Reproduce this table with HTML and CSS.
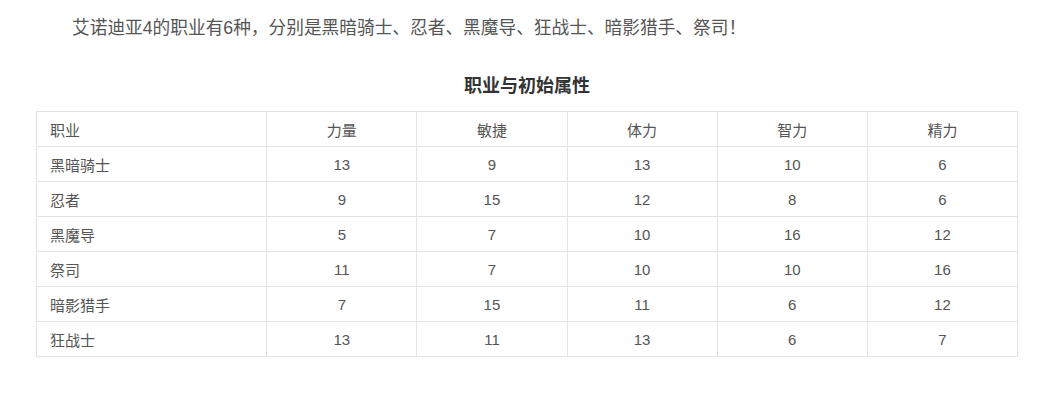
FILE: index.html
```html
<!DOCTYPE html>
<html lang="zh-CN">
<head>
<meta charset="utf-8">
<link rel="stylesheet" href="styles.css">
</head>
<body>
<div class="page">
  <p class="intro">艾诺迪亚4的职业有6种，分别是黑暗骑士、忍者、黑魔导、狂战士、暗影猎手、祭司！</p>
  <h3 class="title">职业与初始属性</h3>
  <table class="stats">
    <colgroup>
      <col class="c-name">
      <col class="c-num"><col class="c-num"><col class="c-num"><col class="c-num"><col class="c-num">
    </colgroup>
    <tr><td class="name">职业</td><td>力量</td><td>敏捷</td><td>体力</td><td>智力</td><td>精力</td></tr>
    <tr><td class="name">黑暗骑士</td><td>13</td><td>9</td><td>13</td><td>10</td><td>6</td></tr>
    <tr><td class="name">忍者</td><td>9</td><td>15</td><td>12</td><td>8</td><td>6</td></tr>
    <tr><td class="name">黑魔导</td><td>5</td><td>7</td><td>10</td><td>16</td><td>12</td></tr>
    <tr><td class="name">祭司</td><td>11</td><td>7</td><td>10</td><td>10</td><td>16</td></tr>
    <tr><td class="name">暗影猎手</td><td>7</td><td>15</td><td>11</td><td>6</td><td>12</td></tr>
    <tr><td class="name">狂战士</td><td>13</td><td>11</td><td>13</td><td>6</td><td>7</td></tr>
  </table>
</div>
</body>
</html>
```

FILE: styles.css
```css
html, body {
  margin: 0;
  padding: 0;
  background: #fff;
}
.page {
  padding: 13px 46px 0 36px;
  font-family: "Liberation Sans", "Noto Sans CJK SC", sans-serif;
  color: #555;
}
.intro {
  margin: 0;
  font-size: 17.7px;
  line-height: 30px;
  text-indent: 36px;
  color: #555;
}
.title {
  margin: 31px 0 13px;
  font-size: 18px;
  line-height: 24px;
  font-weight: bold;
  text-align: center;
  color: #333;
}
.stats {
  width: 982px;
  border-collapse: collapse;
  table-layout: fixed;
  box-shadow: 0 1px 2px rgba(0,0,0,0.06);
}
.c-name { width: 230px; }
.c-num { width: 150px; }
.stats td {
  border: 1px solid #e4e4e4;
  height: 34px;
  padding: 0;
  font-size: 15px;
  text-align: center;
  vertical-align: middle;
  color: #555;
}
.stats td.name {
  text-align: left;
  padding-left: 13px;
}
```
